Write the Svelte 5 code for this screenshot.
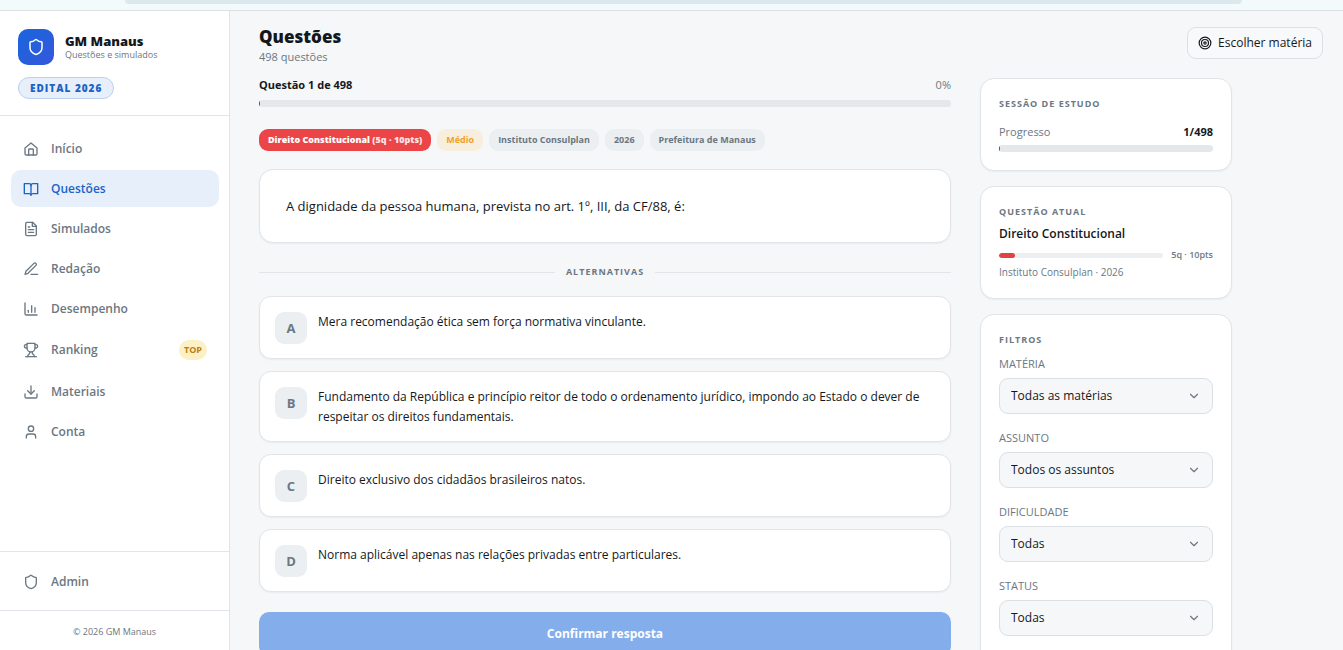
<script lang="ts">
  type Item = { label: string; icon: string; badge?: string };

  const icons: Record<string, string[]> = {
    home: ["M3 10.5 12 3l9 7.5V19a2 2 0 0 1-2 2H5a2 2 0 0 1-2-2z", "M8.5 21v-8a1 1 0 0 1 1-1h5a1 1 0 0 1 1 1v8"],
    book: ["M12 6v15", "M2 4h7a3 3 0 0 1 3 3 3 3 0 0 1 3-3h7v15h-7a3 3 0 0 0-3 2 3 3 0 0 0-3-2H2z"],
    file: ["M14.5 2H6a2 2 0 0 0-2 2v16a2 2 0 0 0 2 2h12a2 2 0 0 0 2-2V7.5z", "M14 2v6h6", "M8 9h2", "M8 13h8", "M8 17h8"],
    pen: ["M12 20h10", "M16.4 3.6a2.1 2.1 0 0 1 3 3L7.5 18.5 3 20l1.4-4.5z"],
    chart: ["M3 3v16a2 2 0 0 0 2 2h16", "M8 17v-3", "M13 17V7", "M18 17V10"],
    trophy: [
      "M6 9H4.5a2.5 2.5 0 0 1 0-5H6", "M18 9h1.5a2.5 2.5 0 0 0 0-5H18", "M4 22h16",
      "M10 14.7V17c0 .6-.5 1-1 1.2C7.9 18.8 7 20.2 7 22", "M14 14.7V17c0 .6.5 1 1 1.2 1.1.6 2 2 2 3.8",
      "M18 2H6v7a6 6 0 0 0 12 0z",
    ],
    download: ["M12 3v12", "m7 10 5 5 5-5", "M21 15v4a2 2 0 0 1-2 2H5a2 2 0 0 1-2-2v-4"],
    user: ["M19 21v-2a4 4 0 0 0-4-4H9a4 4 0 0 0-4 4v2", "M12 3a4 4 0 1 1 0 8 4 4 0 0 1 0-8z"],
    shield: ["M20 13c0 5-3.5 7.5-8 9-4.5-1.5-8-4-8-9V6c0-.6.4-1 1-1 2 0 4.5-1.2 6.2-2.7a1.2 1.2 0 0 1 1.6 0C14.5 3.8 17 5 19 5c.6 0 1 .4 1 1z"],
    target: [
      "M12 2a10 10 0 1 1 0 20 10 10 0 0 1 0-20z",
      "M12 6a6 6 0 1 1 0 12 6 6 0 0 1 0-12z",
      "M12 10a2 2 0 1 1 0 4 2 2 0 0 1 0-4z",
    ],
    chevron: ["m6 9 6 6 6-6"],
  };

  const nav: Item[] = [
    { label: "Início", icon: "home" },
    { label: "Questões", icon: "book" },
    { label: "Simulados", icon: "file" },
    { label: "Redação", icon: "pen" },
    { label: "Desempenho", icon: "chart" },
    { label: "Ranking", icon: "trophy", badge: "TOP" },
    { label: "Materiais", icon: "download" },
    { label: "Conta", icon: "user" },
  ];

  const options = [
    { letter: "A", text: "Mera recomendação ética sem força normativa vinculante." },
    { letter: "B", text: "Fundamento da República e princípio reitor de todo o ordenamento jurídico, impondo ao Estado o dever de respeitar os direitos fundamentais." },
    { letter: "C", text: "Direito exclusivo dos cidadãos brasileiros natos." },
    { letter: "D", text: "Norma aplicável apenas nas relações privadas entre particulares." },
  ];

  const filters = [
    { id: "materia", label: "Matéria", all: "Todas as matérias" },
    { id: "assunto", label: "Assunto", all: "Todos os assuntos" },
    { id: "dificuldade", label: "Dificuldade", all: "Todas" },
    { id: "status", label: "Status", all: "Todas" },
  ];

  const total = 498;
  const current = 1;
  const percent = (current / total) * 100;
  const subjectShare = 10;

  let active = $state("Questões");
  let chosen = $state("");
</script>

{#snippet icon(name: string, size: number)}
  <svg class="icon" width={size} height={size} viewBox="0 0 24 24" aria-hidden="true">
    {#each icons[name] as d}
      <path {d} />
    {/each}
  </svg>
{/snippet}

<div class="page">
  <div class="strip"><div class="strip-pill"></div></div>

  <div class="shell">
    <aside class="sidebar">
      <div class="brand">
        <div class="brand-row">
          <div class="logo">{@render icon("shield", 18)}</div>
          <div>
            <div class="brand-name">GM Manaus</div>
            <div class="brand-sub">Questões e simulados</div>
          </div>
        </div>
        <span class="edital">EDITAL 2026</span>
      </div>

      <nav class="nav">
        {#each nav as item}
          <a
            class="nav-item"
            class:active={active === item.label}
            class:tall={item.badge}
            href="#{item.icon}"
            onclick={() => (active = item.label)}
          >
            {@render icon(item.icon, 16)}
            <span>{item.label}</span>
            {#if item.badge}<span class="badge">{item.badge}</span>{/if}
          </a>
        {/each}
      </nav>

      <div class="admin">
        <a class="nav-item" href="#admin">{@render icon("shield", 16)}<span>Admin</span></a>
      </div>
      <div class="copyright">© 2026 GM Manaus</div>
    </aside>

    <main class="main">
      <header class="header">
        <div>
          <h1>Questões</h1>
          <p class="count">{total} questões</p>
        </div>
        <button class="pick">{@render icon("target", 14)}Escolher matéria</button>
      </header>

      <div class="columns">
        <section class="question">
          <div class="row">
            <strong class="row-title">Questão {current} de {total}</strong>
            <span class="muted">0%</span>
          </div>
          <div class="bar"><div class="fill" style="width: {percent}%"></div></div>

          <div class="chips">
            <span class="chip subject">Direito Constitucional <span class="weight">(5q · 10pts)</span></span>
            <span class="chip level">Médio</span>
            <span class="chip">Instituto Consulplan</span>
            <span class="chip">2026</span>
            <span class="chip">Prefeitura de Manaus</span>
          </div>

          <div class="card statement">A dignidade da pessoa humana, prevista no art. 1º, III, da CF/88, é:</div>

          <div class="divider"><span>ALTERNATIVAS</span></div>

          <div class="options">
            {#each options as option}
              <button
                class="card option"
                class:chosen={chosen === option.letter}
                onclick={() => (chosen = option.letter)}
              >
                <span class="letter">{option.letter}</span>
                <span class="option-text">{option.text}</span>
              </button>
            {/each}
          </div>

          <button class="confirm" disabled={!chosen}>Confirmar resposta</button>
        </section>

        <aside class="side">
          <div class="card panel">
            <h2>Sessão de estudo</h2>
            <div class="row progress-row">
              <span class="muted">Progresso</span>
              <strong class="row-title">{current}/{total}</strong>
            </div>
            <div class="bar"><div class="fill" style="width: {percent}%"></div></div>
          </div>

          <div class="card panel">
            <h2>Questão atual</h2>
            <div class="subject-name">Direito Constitucional</div>
            <div class="subject-row">
              <div class="thin"><div class="thin-fill" style="width: {subjectShare}%"></div></div>
              <span class="points">5q · 10pts</span>
            </div>
            <div class="source">Instituto Consulplan · 2026</div>
          </div>

          <div class="card panel">
            <h2>Filtros</h2>
            {#each filters as filter}
              <div class="field">
                <label for={filter.id}>{filter.label}</label>
                <div class="select">
                  <select id={filter.id}><option>{filter.all}</option></select>
                  {@render icon("chevron", 14)}
                </div>
              </div>
            {/each}
          </div>
        </aside>
      </div>
    </main>
  </div>
</div>

<style>
  :global(body) { background: #f5f7f9; }

  .page {
    --text: #14181c;
    --muted: #6b7782;
    --line: #e1e5e9;
    --soft: #ebeff2;
    --blue: #1b63c6;

    height: 100vh;
    display: flex;
    flex-direction: column;
    overflow: hidden;
    font-family: "Open Sans", "Noto Sans", sans-serif;
    font-size: 13px;
    line-height: 20px;
    color: var(--text);
  }
  .page * { box-sizing: border-box; }
  button, select { font: inherit; color: inherit; cursor: pointer; }

  .icon {
    flex: none;
    fill: none;
    stroke: currentColor;
    stroke-width: 2;
    stroke-linecap: round;
    stroke-linejoin: round;
  }

  /* top strip */
  .strip {
    flex: none;
    height: 11px;
    padding: 0 101px 0 125px;
    background: #f3fafc;
    border-bottom: 1px solid #dbe2e6;
  }
  .strip-pill { height: 4px; background: #dbe9ee; border-radius: 0 0 12px 12px; }

  .shell { flex: 1; min-height: 0; display: flex; }

  /* sidebar */
  .sidebar {
    flex: none;
    width: 230px;
    display: flex;
    flex-direction: column;
    background: #fff;
    border-right: 1px solid var(--line);
  }
  .brand { padding: 18px 18px 16px; border-bottom: 1px solid var(--line); }
  .brand-row { display: flex; align-items: center; gap: 11px; margin-bottom: 12px; }
  .logo {
    width: 36px;
    height: 36px;
    display: grid;
    place-items: center;
    border-radius: 10px;
    background: linear-gradient(135deg, #1a66dc, #3457dc);
    color: #fff;
  }
  .brand-name { font-weight: 800; line-height: 16px; }
  .brand-sub { font-size: 9px; line-height: 12px; color: var(--muted); }
  .edital {
    display: block;
    width: fit-content;
    padding: 0 11px;
    border: 1px solid #b9d2f0;
    border-radius: 11px;
    background: #e7effb;
    color: var(--blue);
    font-size: 10px;
    font-weight: 800;
    letter-spacing: 1px;
  }

  .nav { flex: 1; display: flex; flex-direction: column; gap: 3px; padding: 14px 10px 0 11px; }
  .nav-item {
    display: flex;
    align-items: center;
    gap: 12px;
    height: 37px;
    padding: 0 12px;
    border-radius: 10px;
    color: var(--muted);
    font-size: 12px;
    font-weight: 600;
    text-decoration: none;
  }
  .nav-item.tall { height: 40px; }
  .nav-item.active { background: #e7effb; color: var(--blue); }
  .badge {
    margin-left: auto;
    padding: 0 5px;
    border-radius: 10px;
    background: #fdf0c4;
    color: #b98014;
    font-size: 9px;
    font-weight: 700;
  }
  .admin { padding: 11px 11px 10px; border-top: 1px solid var(--line); border-bottom: 1px solid var(--line); }
  .copyright { padding: 11px 0 8px; text-align: center; font-size: 9px; color: var(--muted); }

  /* main */
  .main { flex: 1; min-width: 0; padding: 15px 20px 0 29px; overflow: hidden; }
  .header { display: flex; justify-content: space-between; align-items: flex-start; }
  h1 { margin: 0; font-size: 17px; font-weight: 800; line-height: 21px; }
  .count { margin: 0; font-size: 11px; color: var(--muted); }
  .pick {
    display: flex;
    align-items: center;
    gap: 6px;
    height: 32px;
    margin-top: 1px;
    padding: 0 10px;
    border: 1px solid #dbe0e5;
    border-radius: 9px;
    background: #f7f9fa;
    font-size: 12px;
    font-weight: 500;
  }

  .columns {
    display: grid;
    grid-template-columns: minmax(0, 1fr) 252px;
    gap: 29px;
    align-items: start;
    max-width: 973px;
    margin-top: 11px;
  }
  .row { display: flex; justify-content: space-between; font-size: 11px; line-height: 14px; }
  .row-title { font-weight: 700; }
  .muted { color: var(--muted); }
  .bar { height: 7px; margin-top: 8px; border-radius: 4px; background: #e4e8eb; overflow: hidden; }
  .fill { height: 100%; background: var(--blue); }

  .chips { display: flex; flex-wrap: wrap; gap: 6px; margin: 22px 0 18px; }
  .chip {
    padding: 1px 9px;
    border-radius: 9px;
    background: var(--soft);
    color: var(--muted);
    font-size: 9px;
    font-weight: 700;
  }
  .chip.subject { background: #eb4548; color: #fff; font-weight: 800; }
  .weight { opacity: 0.85; }
  .chip.level { background: #f8eedd; color: #f0a02c; }

  .card {
    background: #fff;
    border: 1px solid var(--line);
    border-radius: 14px;
    box-shadow: 0 1px 2px rgba(20, 30, 50, 0.05);
  }
  .statement { padding: 26px; }

  .divider {
    display: flex;
    align-items: center;
    gap: 11px;
    margin: 19px 0 14px;
    color: var(--muted);
    font-size: 9px;
    font-weight: 700;
    letter-spacing: 1px;
  }
  .divider::before, .divider::after { content: ""; flex: 1; height: 1px; background: var(--line); }

  .options { display: flex; flex-direction: column; gap: 12px; }
  .option {
    display: flex;
    align-items: flex-start;
    gap: 11px;
    width: 100%;
    padding: 15px 15px 14px;
    border-radius: 12px;
    font-size: 12px;
    text-align: left;
  }
  .option.chosen { border-color: var(--blue); }
  .letter {
    flex: none;
    width: 32px;
    height: 32px;
    border-radius: 9px;
    background: var(--soft);
    color: var(--muted);
    font-size: 13px;
    font-weight: 700;
    line-height: 32px;
    text-align: center;
  }
  .confirm {
    width: 100%;
    height: 44px;
    margin-top: 20px;
    border: 0;
    border-radius: 10px;
    background: var(--blue);
    color: #fff;
    font-size: 12px;
    font-weight: 700;
  }
  .confirm:disabled { background: #84adeb; cursor: default; }

  /* right column */
  .side { display: flex; flex-direction: column; gap: 15px; }
  .panel { padding: 17px 18px 18px; }
  h2 {
    margin: 0;
    font-size: 9px;
    font-weight: 700;
    line-height: 16px;
    letter-spacing: 1px;
    text-transform: uppercase;
    color: var(--muted);
  }
  .progress-row { margin-top: 13px; }
  .progress-row + .bar { margin-top: 6px; }
  .subject-name { margin-top: 4px; font-size: 12px; font-weight: 600; }
  .subject-row { display: flex; align-items: center; gap: 8px; margin-top: 1px; }
  .thin { flex: 1; height: 5px; border-radius: 3px; background: var(--soft); overflow: hidden; }
  .thin-fill { height: 100%; border-radius: 3px; background: #e04346; }
  .points { font-size: 9px; font-weight: 600; color: var(--muted); }
  .source { font-size: 10px; line-height: 15px; color: var(--muted); }

  .field { margin-bottom: 16px; }
  h2 + .field { margin-top: 8px; }
  .field label {
    display: block;
    margin-bottom: 6px;
    font-size: 11px;
    font-weight: 500;
    line-height: 16px;
    text-transform: uppercase;
    color: var(--muted);
  }
  .select { display: grid; align-items: center; color: var(--muted); }
  .select > :global(*) { grid-area: 1 / 1; }
  .select > :global(.icon) { justify-self: end; margin-right: 12px; pointer-events: none; }
  .select select {
    appearance: none;
    width: 100%;
    height: 36px;
    padding: 0 32px 0 11px;
    border: 1px solid #dbe0e5;
    border-radius: 9px;
    background: #f5f7f9;
    color: var(--text);
    font-size: 12px;
  }
</style>
